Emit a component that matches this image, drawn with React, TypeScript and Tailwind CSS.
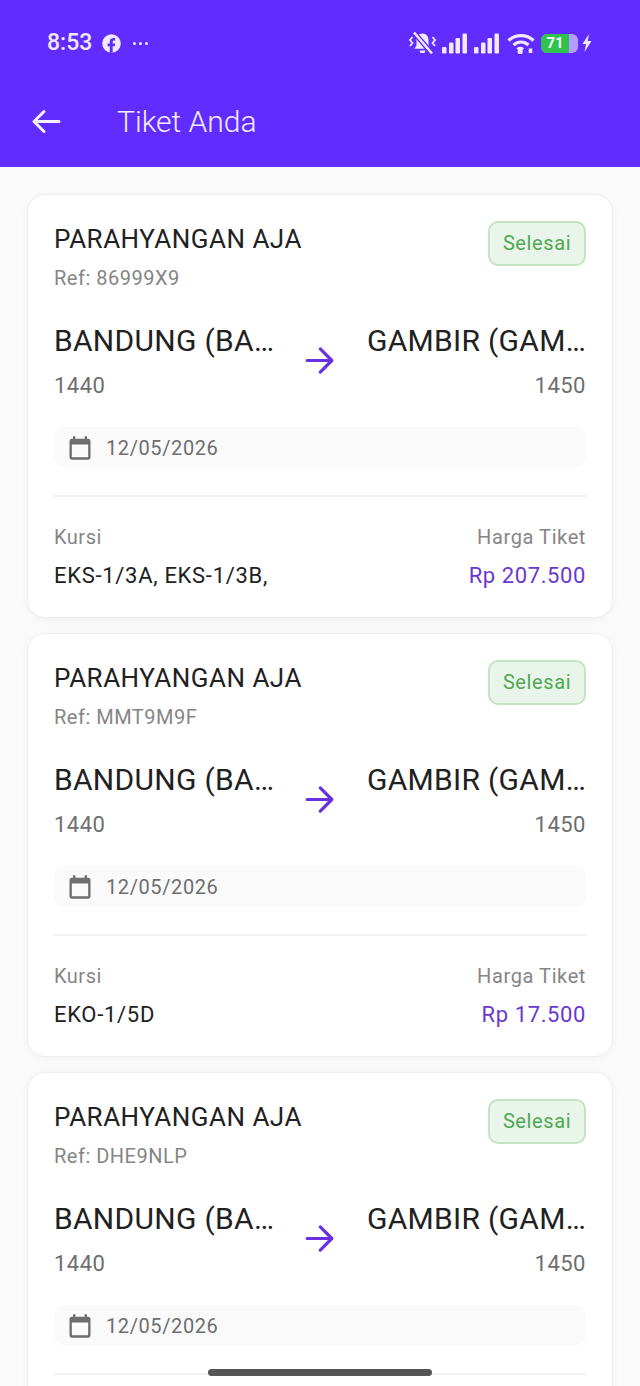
import React from "react";

const tickets = [
  { ref: "86999X9", seats: "EKS-1/3A, EKS-1/3B,", price: "Rp 207.500" },
  { ref: "MMT9M9F", seats: "EKO-1/5D", price: "Rp 17.500" },
  { ref: "DHE9NLP", seats: "EKO-1/5D", price: "Rp 17.500" },
];

function Bars({ className }: { className: string }) {
  return (
    <svg className={className} width="25" height="21" viewBox="0 0 25 21" fill="#f1e9ff">
      <rect x="0" y="14" width="4.500" height="6.500" rx="1.200" />
      <rect x="7" y="9.500" width="4.500" height="11" rx="1.200" />
      <rect x="13.500" y="5" width="4.500" height="15.500" rx="1.200" />
      <rect x="20.500" y="0.500" width="4.500" height="20" rx="1.200" />
    </svg>
  );
}

function StatusBar() {
  return (
    <div className="flex h-[84px] items-start justify-between pl-[47px] pr-[48px] pt-[29px] text-[#f1e9ff]">
      <div className="flex h-[28px] items-center">
        <span className="text-[23px] font-medium leading-[28px]">8:53</span>
        <svg className="ml-[10px]" width="19" height="19" viewBox="0 0 18 18">
          <circle cx="9" cy="9" r="8.800" fill="#f1e9ff" />
          <path d="M7.400 17.800v-6.200H5.300V9h2.100V7.200c0-2.200 1.300-3.400 3.300-3.400.9 0 1.800.2 1.800.2v2.200h-1c-1 0-1.400.6-1.400 1.300V9h2.400l-.4 2.600h-2v6.200z" fill="#602cff" />
        </svg>
        <div className="ml-[12px] flex gap-[3px]">
          <span className="h-[3px] w-[3px] rounded-full bg-[#f1e9ff]" />
          <span className="h-[3px] w-[3px] rounded-full bg-[#f1e9ff]" />
          <span className="h-[3px] w-[3px] rounded-full bg-[#f1e9ff]" />
        </div>
      </div>
      <div className="flex h-[28px] items-center">
        <svg width="27" height="25" viewBox="0 0 27 25" fill="none">
          <path d="M13.500 2.500c-3.700 0-6 2.800-6 6.500v5.500l-2.200 3.300h16.400l-2.200-3.300V9c0-3.700-2.300-6.500-6-6.500z" fill="#f1e9ff" />
          <path d="M10.500 19.500h6l-1 2.500h-4z" fill="#f1e9ff" />
          <path d="M5 1.500l18 21" stroke="#602cff" strokeWidth="5" />
          <path d="M5 1.500l18 21" stroke="#f1e9ff" strokeWidth="2.500" />
          <path d="M3.500 6L1 9l2.500 3L1 15M23.500 6L26 9l-2.500 3L26 15" stroke="#f1e9ff" strokeWidth="1.800" />
        </svg>
        <Bars className="ml-[6px]" />
        <Bars className="ml-[7px]" />
        <svg className="ml-[8px]" width="28" height="21" viewBox="0 0 28 21" fill="none" stroke="#f1e9ff" strokeWidth="3.200">
          <path d="M1.500 7.500C8.500 1 19.500 1 26.500 7.500" />
          <path d="M6.500 12c4.500-4 10.500-4 15 0" />
          <path d="M10.500 16.500c1.800-1.400 3.700-1.400 5.500 0" />
          <circle cx="13.200" cy="18.800" r="1" fill="#f1e9ff" />
          <path d="M23.500 15.500v4.500" strokeWidth="3.600" />
        </svg>
        <div className="ml-[6px] flex h-[19px] w-[37px] overflow-hidden rounded-[6px] bg-[#b59cff]">
          <div className="flex h-full w-[28px] items-center justify-center bg-[#2fc24e] text-[15px] font-bold leading-none text-[#f4fff4]">71</div>
        </div>
        <svg className="ml-[4px]" width="10" height="18" viewBox="0 0 10 18" fill="#f1e9ff">
          <path d="M7 0L0.500 10h3.500L2.500 18l7-11H5.700z" />
        </svg>
      </div>
    </div>
  );
}

function TicketCard({ ticket }: { ticket: (typeof tickets)[number] }) {
  return (
    <div className="h-[424px] shrink-0 rounded-[18px] border border-[#eeeeee] bg-white px-[26px] pt-[26px] shadow-[0_2px_8px_rgba(0,0,0,0.04)]">
      <div className="flex items-start justify-between">
        <div>
          <div className="text-[26px] leading-[36px] tracking-[0.5px] text-[#212121]">PARAHYANGAN AJA</div>
          <div className="mt-[9px] text-[20px] leading-[24px] tracking-[0.5px] text-[#858585]">Ref: {ticket.ref}</div>
        </div>
        <div className="flex h-[45px] w-[98px] items-center justify-center rounded-[10px] border-2 border-[#c4e3c5] bg-[#e9f5ea] pb-[2px] text-[20px] tracking-[0.6px] text-[#4fa853]">
          Selesai
        </div>
      </div>
      <div className="mt-[29px] flex items-center">
        <div className="w-[220px] min-w-0">
          <div className="whitespace-nowrap text-[30px] leading-[44px] tracking-[0.3px] text-[#212121]">BANDUNG (BA…</div>
          <div className="mt-[10px] text-[22px] leading-[26px] tracking-[0.5px] text-[#6e6e6e]">1440</div>
        </div>
        <div className="flex flex-1 justify-center pr-[2px] pt-[2px]">
          <svg width="37" height="37" viewBox="0 0 24 24" fill="none" stroke="#6a30e0" strokeWidth="2.100" strokeLinecap="round" strokeLinejoin="round">
            <path d="M4 12h15.500M12.500 4.500L20 12l-7.500 7.500" />
          </svg>
        </div>
        <div className="w-[220px] min-w-0 text-right">
          <div className="whitespace-nowrap text-[30px] leading-[44px] tracking-[0.3px] text-[#212121]">GAMBIR (GAM…</div>
          <div className="mt-[10px] text-[22px] leading-[26px] tracking-[0.5px] text-[#6e6e6e]">1450</div>
        </div>
      </div>
      <div className="mt-[28px] flex h-[41px] items-center rounded-[12px] bg-[#fafafa] pl-[12px]">
        <svg width="28" height="28" viewBox="0 0 24 24" fill="#6e6e6e">
          <path d="M19 4h-1V2h-2v2H8V2H6v2H5c-1.100 0-2 .9-2 2v14c0 1.100.9 2 2 2h14c1.100 0 2-.9 2-2V6c0-1.100-.9-2-2-2zm0 16H5V9h14z" />
        </svg>
        <span className="ml-[12px] text-[20px] leading-[26px] tracking-[0.6px] text-[#6e6e6e]">12/05/2026</span>
      </div>
      <div className="mt-[27px] h-[2px] bg-[#f2f2f2]" />
      <div className="mt-[27px] flex items-start justify-between">
        <div>
          <div className="text-[20px] leading-[26px] tracking-[0.5px] text-[#858585]">Kursi</div>
          <div className="mt-[13px] text-[22px] font-[450] leading-[26px] tracking-[0.7px] text-[#212121]">{ticket.seats}</div>
        </div>
        <div className="text-right">
          <div className="text-[20px] leading-[26px] tracking-[0.6px] text-[#858585]">Harga Tiket</div>
          <div className="mt-[13px] text-[22px] font-[450] leading-[26px] tracking-[0.6px] text-[#6a38d0]">{ticket.price}</div>
        </div>
      </div>
    </div>
  );
}

export default function App() {
  return (
    <div className="relative h-[1386px] w-[640px] overflow-hidden bg-[#fafafa] font-['Roboto',sans-serif]">
      <div className="h-[167px] bg-[#602cff]">
        <StatusBar />
        <div className="flex h-[75px] items-center pl-[30px]">
          <svg width="32" height="32" viewBox="0 0 32 32" fill="none" stroke="#f6f0ff" strokeWidth="3" strokeLinecap="round" strokeLinejoin="round">
            <path d="M4 15.500h25M14 5.500L4 15.500l10 10" />
          </svg>
          <span className="ml-[55px] text-[30px] font-light leading-none text-[#f4ecff]">Tiket Anda</span>
        </div>
      </div>
      <div className="flex flex-col gap-[15px] px-[27px] pt-[27px]">
        {tickets.map((t) => (
          <TicketCard key={t.ref} ticket={t} />
        ))}
      </div>
      <div className="absolute bottom-[10px] left-[208px] h-[7px] w-[224px] rounded-full bg-[#555555]" />
    </div>
  );
}
